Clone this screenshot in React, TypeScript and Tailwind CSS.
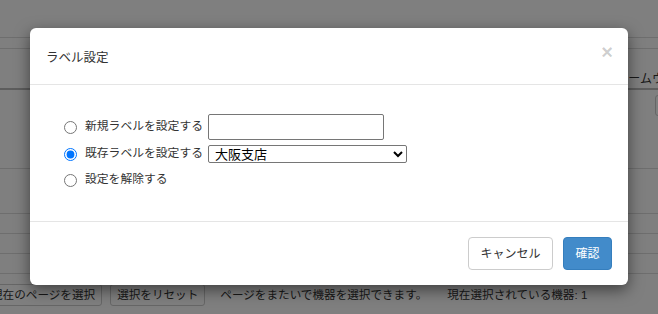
import React from "react";

const font = { fontFamily: '"Liberation Sans", "Noto Sans CJK JP", sans-serif' };

function BackgroundPage() {
  return (
    <div className="flex flex-col w-full h-full bg-white text-[11.6px] text-[#333]">
      <div className="h-[38px] border-b border-[#ddd] shrink-0" />
      <div className="h-[11px] border-b border-[#ddd] shrink-0" />
      <div className="h-[41px] border-b-2 border-[#bbb] shrink-0 flex items-end justify-end">
        <span className="whitespace-nowrap mr-[-30px] text-[12px] leading-[18px]">ファームウェア</span>
      </div>
      <div className="h-[79px] border-b border-[#ddd] shrink-0 flex justify-end pt-[5px]">
        <div className="w-[20px] h-[21px] border border-[#ccc] rounded-[3px] mr-[-17px]" />
      </div>
      <div className="h-[45px] border-b border-[#ddd] shrink-0" />
      <div className="h-[20px] border-b border-[#ddd] shrink-0" />
      <div className="h-[20px] border-b border-[#ddd] shrink-0" />
      <div className="h-[20px] border-b border-[#ddd] shrink-0" />
      <div className="flex items-center pt-[10px] whitespace-nowrap">
        <div className="ml-[-16px] h-[22px] px-[6px] border border-[#ccc] rounded-[3px] flex items-center">現在のページを選択</div>
        <div className="ml-[8px] h-[22px] px-[6px] border border-[#ccc] rounded-[3px] flex items-center">選択をリセット</div>
        <span className="ml-[15px]">ページをまたいで機器を選択できます。</span>
        <span className="ml-[20px]">現在選択されている機器: 1</span>
      </div>
    </div>
  );
}

function RadioRow({ label, checked, children }: { label: string; checked?: boolean; children?: React.ReactNode }) {
  return (
    <label className="flex items-center">
      <input type="radio" name="label-mode" checked={!!checked} onChange={() => {}} className="m-0 w-[13px] h-[13px]" />
      <span className="ml-[8px] mr-[5px] text-[11.8px] text-[#333] whitespace-nowrap">{label}</span>
      {children}
    </label>
  );
}

export default function App() {
  return (
    <div className="relative w-[658px] h-[314px] overflow-hidden" style={font}>
      <BackgroundPage />
      <div className="absolute inset-0 bg-black/50" />
      <div className="absolute left-[30px] top-[28px] w-[598px] h-[257px] bg-white rounded-[6px] shadow-[0_5px_15px_rgba(0,0,0,0.5)] flex flex-col">
        <div className="h-[57px] shrink-0 border-b border-[#e5e5e5] flex items-start justify-between pl-[16px] pr-[15px]">
          <h4 className="mt-[21px] text-[12.5px] text-[#333] leading-[18px]">ラベル設定</h4>
          <button className="mt-[14px] text-[20px] font-bold leading-none text-black/20">×</button>
        </div>
        <div className="flex-1 flex flex-col pl-[34px] pt-[29px]">
          <RadioRow label="新規ラベルを設定する">
            <input type="text" className="w-[176px] h-[26px] border border-[#767676] rounded-[2px] px-[4px] text-[13px]" />
          </RadioRow>
          <div className="mt-[5px]">
            <RadioRow label="既存ラベルを設定する" checked>
              <select
                defaultValue="osaka"
                className="w-[199px] h-[18px] border border-[#767676] rounded-[2px] text-[13px] leading-[16px] text-black pl-[2px] py-0"
              >
                <option value="osaka">大阪支店</option>
              </select>
            </RadioRow>
          </div>
          <div className="mt-[8px] h-[18px] flex items-center">
            <RadioRow label="設定を解除する" />
          </div>
        </div>
        <div className="h-[64px] shrink-0 border-t border-[#e5e5e5] flex items-center justify-end gap-[10px] pr-[16px]">
          <button className="h-[33px] w-[85px] border border-[#ccc] rounded-[4px] bg-white text-[12px] text-[#333]">キャンセル</button>
          <button className="h-[33px] w-[49px] border border-[#357ebd] rounded-[4px] bg-[#428bca] text-[12px] text-white">確認</button>
        </div>
      </div>
    </div>
  );
}
